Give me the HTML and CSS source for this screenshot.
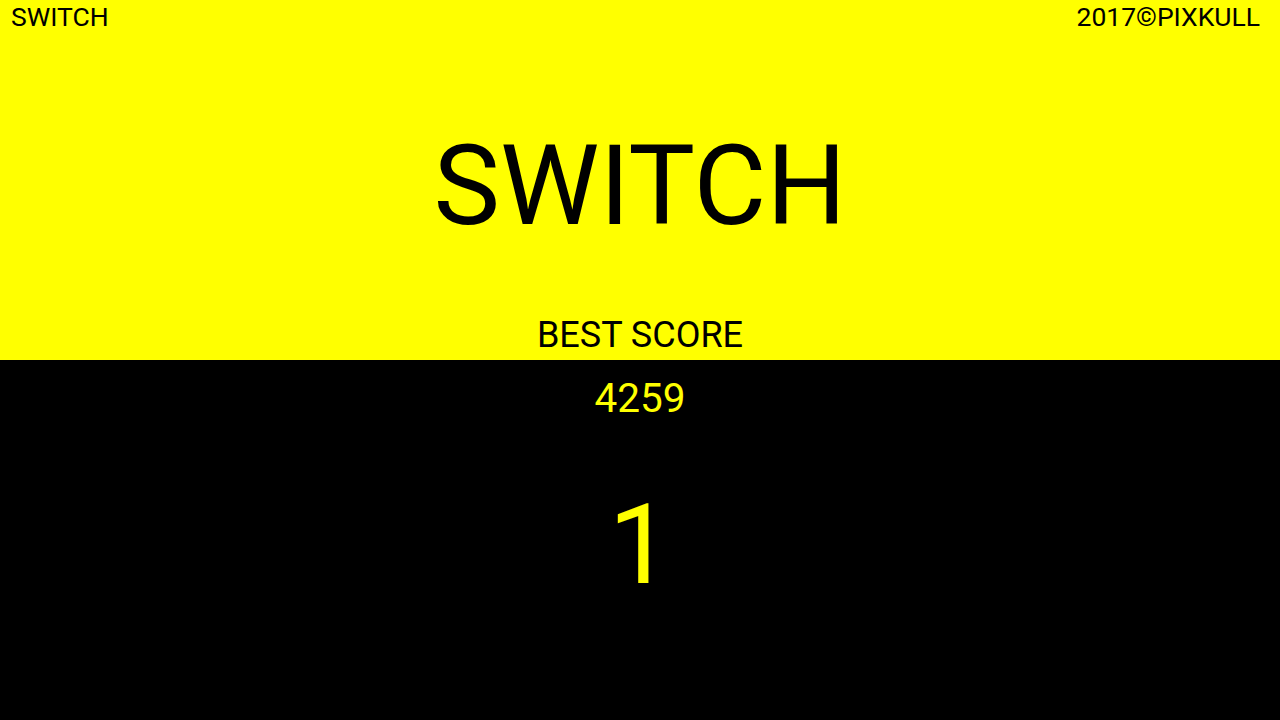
FILE: index.html
```html
<!DOCTYPE html>
<html>
<head>
<meta charset="utf-8">
<link rel="stylesheet" href="styles.css">
</head>
<body>
<div class="top">
  <div class="header">
    <span class="label">SWITCH</span>
    <span class="label">2017©PIXKULL</span>
  </div>
  <div class="title">SWITCH</div>
  <div class="best">BEST SCORE</div>
</div>
<div class="bottom">
  <div class="score">4259</div>
  <div class="current">1</div>
</div>
</body>
</html>
```
FILE: styles.css
```css
html, body {
  margin: 0;
  padding: 0;
  width: 1280px;
  height: 720px;
  overflow: hidden;
  font-family: Roboto, "Liberation Sans", sans-serif;
}
.top {
  height: 360px;
  background: #ffff00;
  color: #000;
  display: flex;
  flex-direction: column;
  align-items: center;
}
.header {
  align-self: stretch;
  display: flex;
  justify-content: space-between;
  padding: 4px 20px 0 11px;
}
.label {
  font-size: 26.5px;
  line-height: 26px;
}
.title {
  margin-top: 100px;
  font-size: 112px;
  line-height: 112px;
}
.best {
  margin-top: auto;
  margin-bottom: 7px;
  font-size: 36px;
  line-height: 36px;
}
.bottom {
  height: 360px;
  background: #000;
  color: #ffff00;
  display: flex;
  flex-direction: column;
  align-items: center;
  padding-top: 18px;
  box-sizing: border-box;
}
.score {
  font-size: 40.5px;
  line-height: 40px;
}
.current {
  margin-top: 72px;
  font-size: 112px;
  line-height: 110px;
}
```
